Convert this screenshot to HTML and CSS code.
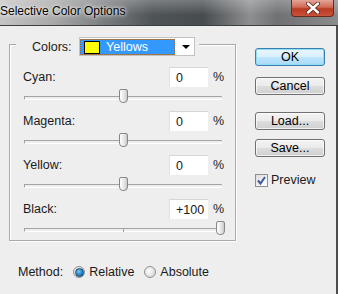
FILE: index.html
```html
<!DOCTYPE html>
<html lang="en">
<head>
  <meta charset="UTF-8" />
  <title>Selective Color Options</title>
  <link rel="stylesheet" href="styles.css">
</head>
<body>
  <div class="window">
    <div class="titlebar">
      <span class="title">Selective Color Options</span>
      <span class="close">
        <svg width="16" height="12" viewBox="0 0 16 12">
          <path d="M3 1.5 L13 10.5 M13 1.5 L3 10.5" stroke="#5a2018" stroke-width="4" stroke-linecap="round"/>
          <path d="M3 1.5 L13 10.5 M13 1.5 L3 10.5" stroke="#fff" stroke-width="2.4" stroke-linecap="round"/>
        </svg>
      </span>
    </div>

    <div class="dialog">
      <div class="main">
        <!-- colour channels -->
        <div class="group">
          <div class="group-head">
            <span class="head-label">Colors:</span>
            <div class="select">
              <div class="select-value"><span class="swatch"></span>Yellows</div>
              <span class="arrow">
                <svg width="8" height="4" viewBox="0 0 8 4"><path d="M0 0 H8 L4 4 Z" fill="#000"/></svg>
              </span>
            </div>
          </div>

          <div class="channel">
            <div class="field">
              <span class="field-label">Cyan:</span>
              <span class="input">0</span>
              <span class="unit">%</span>
            </div>
            <div class="slider"><span class="thumb" style="left: 50%"></span></div>
          </div>

          <div class="channel">
            <div class="field">
              <span class="field-label">Magenta:</span>
              <span class="input">0</span>
              <span class="unit">%</span>
            </div>
            <div class="slider"><span class="thumb" style="left: 50%"></span></div>
          </div>

          <div class="channel">
            <div class="field">
              <span class="field-label">Yellow:</span>
              <span class="input">0</span>
              <span class="unit">%</span>
            </div>
            <div class="slider"><span class="thumb" style="left: 50%"></span></div>
          </div>

          <div class="channel">
            <div class="field">
              <span class="field-label">Black:</span>
              <span class="input">+100</span>
              <span class="unit">%</span>
            </div>
            <div class="slider"><span class="thumb" style="left: 99%"></span></div>
          </div>
        </div>

        <div class="method">
          <span class="method-label">Method:</span>
          <span class="radio checked"></span>
          <span class="radio-label">Relative</span>
          <span class="radio"></span>
          <span class="radio-label">Absolute</span>
        </div>
      </div>

      <div class="side">
        <div class="btn btn-ok">OK</div>
        <div class="btn btn-cancel">Cancel</div>
        <div class="btn btn-load">Load...</div>
        <div class="btn btn-save">Save...</div>
        <div class="check">
          <span class="checkbox">
            <svg width="11" height="11" viewBox="0 0 11 11"><path d="M2 5.5 L4.5 8.5 L9 2" fill="none" stroke="#3d5a9c" stroke-width="2"/></svg>
          </span>
          <span>Preview</span>
        </div>
      </div>
    </div>
  </div>
</body>
</html>
```

FILE: styles.css
```css
* {
  margin: 0;
  padding: 0;
  box-sizing: border-box;
}

body {
  width: 338px;
  height: 294px;
  overflow: hidden;
  font-family: 'Liberation Sans', Arial, sans-serif;
  font-size: 12px;
  color: #1a1a1a;
  background: #eeeeee;
}

.window {
  width: 338px;
  height: 294px;
  display: flex;
  flex-direction: column;
}

/* title bar */
.titlebar {
  height: 26px;
  flex: none;
  display: flex;
  justify-content: space-between;
  align-items: flex-start;
  border-bottom: 1px solid #3c3f41;
  background:
    linear-gradient(180deg, rgba(255,255,255,0.25), rgba(255,255,255,0) 60%),
    linear-gradient(90deg, #c4c4c4 0%, #aaaaaa 15%, #7d8082 30%, #4f5457 45%, #474c4f 60%, #8e8f90 74%, #6f7173 82%, #8a8b8c 100%);
}

.title {
  padding-top: 4px;
  font-size: 12px;
  line-height: 15px;
  color: #000;
  text-shadow: 0 0 6px #fff, 0 0 3px #fff;
  white-space: nowrap;
}

.close {
  width: 43px;
  height: 17px;
  margin-right: 4px;
  display: flex;
  justify-content: center;
  align-items: center;
  border: 1px solid #6a2a1e;
  border-top: none;
  border-radius: 0 0 4px 4px;
  background: linear-gradient(180deg, #e4a597 0%, #d06a55 45%, #b83a22 55%, #c9533b 100%);
}

/* dialog body */
.dialog {
  flex: 1;
  display: flex;
  border-right: 2px solid #4d4d4d;
}

.main {
  width: 236px;
  padding-left: 9px;
}

.group {
  margin-top: 18px;
  width: 227px;
  border: 1px solid #a9a9a9;
  box-shadow: inset 1px 1px 0 #fff, 1px 1px 0 #fff;
  display: flex;
  flex-direction: column;
}

.group-head {
  align-self: flex-start;
  margin: -8px 0 0 6px;
  padding: 0 4px 0 16px;
  height: 19px;
  display: flex;
  align-items: center;
  background: #eeeeee;
  font-size: 12.5px;
}

.head-label {
  width: 47px;
}

.select {
  width: 116px;
  height: 19px;
  display: flex;
  padding-top: 1px;
  background: #fff;
  border: 1px solid #c2c2c2;
}

.select-value {
  width: 95px;
  height: 16px;
  display: flex;
  align-items: center;
  padding-left: 3px;
  color: #fff;
  font-size: 12.5px;
  background: #3399ff;
  border: 1px dotted #9a6a3e;
}

.swatch {
  width: 16px;
  height: 13px;
  margin-right: 6px;
  background: #ffff00;
  border: 1px solid #000;
}

.arrow {
  flex: 1;
  display: flex;
  justify-content: center;
  align-items: center;
  padding-left: 2px;
}

.group-head + .channel {
  margin-top: 11px;
}

.field {
  height: 20px;
  display: flex;
  align-items: center;
  padding: 0 12px 0 13px;
  font-size: 12.5px;
}

.field-label {
  flex: 1;
}

.input {
  width: 39px;
  height: 20px;
  line-height: 20px;
  padding-left: 6px;
  background: #fff;
  border-top: 1px solid #d6d6d6;
  border-left: 1px solid #e2e2e2;
}

.unit {
  margin-left: 5px;
  width: 10px;
}

.slider {
  position: relative;
  height: 24px;
  margin: 0 13px 0 14px;
}

.channel:last-child .slider {
  height: 21px;
}

/* track line with end and centre ticks */
.slider::before {
  content: "";
  position: absolute;
  left: 0;
  right: 0;
  top: 9px;
  height: 2px;
  border-top: 1px solid #a3a3a3;
  border-bottom: 1px solid #fff;
  border-left: 1px solid #a3a3a3;
}

.slider::after {
  content: "";
  position: absolute;
  left: 50%;
  top: 10px;
  width: 1px;
  height: 3px;
  background: #a3a3a3;
}

.thumb {
  position: absolute;
  z-index: 1;
  top: 2px;
  width: 9px;
  height: 14px;
  margin-left: -4px;
  border: 1px solid #878787;
  border-radius: 2px 2px 4px 4px;
  background: linear-gradient(90deg, #ffffff, #e6e6e6 60%, #c9c9c9);
}

/* method */
.method {
  margin: 23px 0 0 9px;
  height: 16px;
  display: flex;
  align-items: center;
  font-size: 12.5px;
}

.radio {
  width: 12px;
  height: 12px;
  margin-left: 10px;
  border-radius: 50%;
  border: 1px solid #8f9090;
  background: radial-gradient(circle at 40% 40%, #ffffff, #dcdcdc 70%, #c8c8c8);
  display: flex;
  justify-content: center;
  align-items: center;
}

.radio.checked::after {
  content: "";
  width: 7px;
  height: 7px;
  border-radius: 50%;
  border: 1px solid #1b4a6e;
  background: radial-gradient(circle at 40% 35%, #7cc4f0, #1f7fc4 60%, #155a8e);
}

.radio-label {
  margin-left: 4px;
}

/* buttons */
.side {
  margin-left: 19px;
  width: 70px;
  display: flex;
  flex-direction: column;
}

.btn {
  height: 18px;
  display: flex;
  justify-content: center;
  align-items: center;
  font-size: 12.5px;
  color: #000;
  border: 1px solid #707070;
  border-radius: 3px;
  background: linear-gradient(180deg, #f3f3f3 0%, #ebebeb 48%, #dddddd 52%, #cfcfcf 100%);
  box-shadow: inset 0 0 0 1px rgba(255,255,255,0.7);
}

.btn-ok {
  margin-top: 22px;
  border-color: #3c7fb1;
  background: linear-gradient(180deg, #eaf6fd 0%, #d9f0fc 48%, #bee6fd 52%, #a7d9f5 100%);
  box-shadow: inset 0 0 0 1px #8fdcf6;
}

.btn-cancel {
  margin-top: 11px;
}

.btn-load {
  margin-top: 17px;
}

.btn-save {
  margin-top: 9px;
}

.check {
  margin-top: 16px;
  display: flex;
  align-items: center;
  font-size: 12.5px;
}

.checkbox {
  width: 13px;
  height: 13px;
  margin-right: 3px;
  display: flex;
  justify-content: center;
  align-items: center;
  border: 1px solid #8e8f8f;
  background: linear-gradient(135deg, #dcdcdc, #ffffff);
}
```
